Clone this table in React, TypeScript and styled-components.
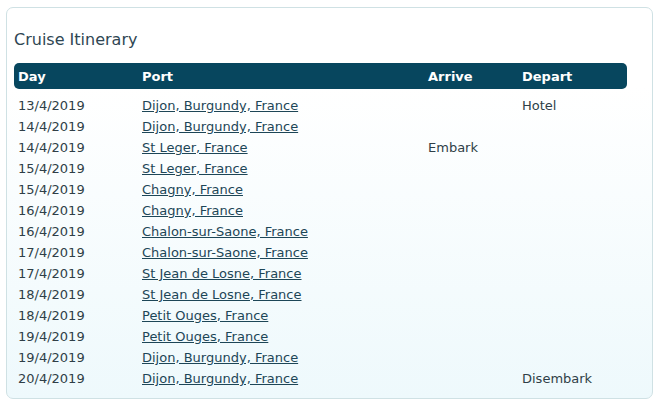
import * as React from "react"
import styled, { createGlobalStyle } from "styled-components"

const GlobalStyle = createGlobalStyle`
	body {
		margin: 0;
		background: #ffffff;
		font-family: Verdana, "DejaVu Sans", sans-serif;
	}
`

const Card = styled.section`
	margin: 7px 0 0 6px;
	width: 647px;
	height: 392px;
	box-sizing: border-box;
	border: 1px solid #cfe1e4;
	border-radius: 7px;
	background: linear-gradient(to bottom, #ffffff 0%, #ffffff 20%, #eef9fc 100%);
	padding: 21px 24px 0 7px;
`

const Title = styled.h2`
	margin: 0 0 12px 0;
	font-size: 16px;
	font-weight: normal;
	color: #2f4653;
	line-height: 22px;
`

const Table = styled.table`
	width: 613px;
	table-layout: fixed;
	border-collapse: separate;
	border-spacing: 0;
	font-size: 13px;
	color: #2f3f47;
`

const HeadCell = styled.th<{ $w?: number }>`
	background: #07465e;
	color: #ffffff;
	font-weight: bold;
	text-align: left;
	height: 26px;
	padding: 0 0 0 4px;
	width: ${(p) => (p.$w ? `${p.$w}px` : "auto")};
	&:first-child {
		border-radius: 5px 0 0 5px;
	}
	&:last-child {
		border-radius: 0 5px 5px 0;
	}
`

const Cell = styled.td`
	height: 21px;
	padding: 0 0 0 4px;
	vertical-align: middle;
	white-space: nowrap;
`

const PortLink = styled.a`
	color: #1d4657;
	text-decoration: underline;
`

const FirstRow = styled.tr`
	& > td {
		padding-top: 6px;
	}
`

const stops = [
	["13/4/2019", "Dijon, Burgundy, France", "", "Hotel"],
	["14/4/2019", "Dijon, Burgundy, France", "", ""],
	["14/4/2019", "St Leger, France", "Embark", ""],
	["15/4/2019", "St Leger, France", "", ""],
	["15/4/2019", "Chagny, France", "", ""],
	["16/4/2019", "Chagny, France", "", ""],
	["16/4/2019", "Chalon-sur-Saone, France", "", ""],
	["17/4/2019", "Chalon-sur-Saone, France", "", ""],
	["17/4/2019", "St Jean de Losne, France", "", ""],
	["18/4/2019", "St Jean de Losne, France", "", ""],
	["18/4/2019", "Petit Ouges, France", "", ""],
	["19/4/2019", "Petit Ouges, France", "", ""],
	["19/4/2019", "Dijon, Burgundy, France", "", ""],
	["20/4/2019", "Dijon, Burgundy, France", "", "Disembark"],
]

export default function App() {
	return (
		<>
			<GlobalStyle />
			<Card>
				<Title>Cruise Itinerary</Title>
				<Table>
					<thead>
						<tr>
							<HeadCell $w={120}>Day</HeadCell>
							<HeadCell $w={282}>Port</HeadCell>
							<HeadCell $w={90}>Arrive</HeadCell>
							<HeadCell>Depart</HeadCell>
						</tr>
					</thead>
					<tbody>
						{stops.map((s, i) => {
							const Row = i === 0 ? FirstRow : "tr"
							return (
								<Row key={i}>
									<Cell>{s[0]}</Cell>
									<Cell>
										<PortLink href="#">{s[1]}</PortLink>
									</Cell>
									<Cell>{s[2]}</Cell>
									<Cell>{s[3]}</Cell>
								</Row>
							)
						})}
					</tbody>
				</Table>
			</Card>
		</>
	)
}
